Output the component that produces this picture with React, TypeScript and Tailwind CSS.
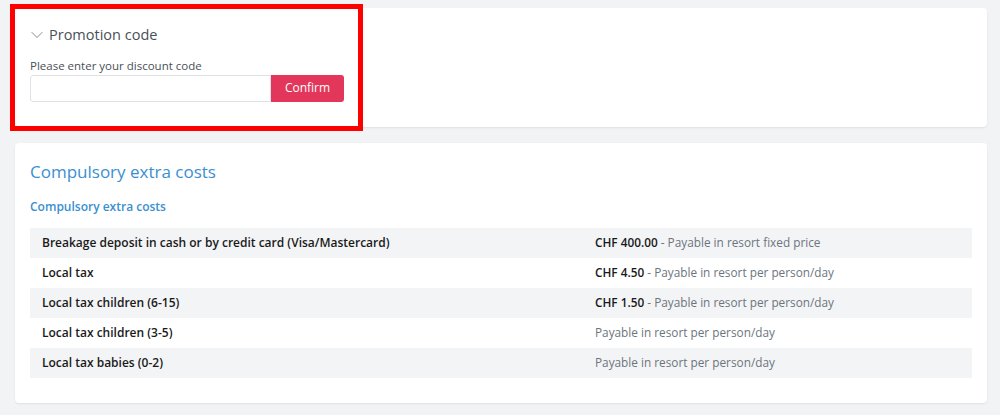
import { ChevronDown } from 'lucide-react';

const ROWS: { label: string; price?: string; note: string }[] = [
  { label: 'Breakage deposit in cash or by credit card (Visa/Mastercard)', price: 'CHF 400.00', note: 'Payable in resort fixed price' },
  { label: 'Local tax', price: 'CHF 4.50', note: 'Payable in resort per person/day' },
  { label: 'Local tax children (6-15)', price: 'CHF 1.50', note: 'Payable in resort per person/day' },
  { label: 'Local tax children (3-5)', note: 'Payable in resort per person/day' },
  { label: 'Local tax babies (0-2)', note: 'Payable in resort per person/day' },
];

export default function App() {
  return (
    <div className="relative min-h-[415px] bg-[#f1f3f5] pl-[15px] pr-[13px] pt-[8px] pb-3 font-['Open_Sans',sans-serif] text-[#212529]">
      {/* Promotion code */}
      <div className="h-[119px] rounded-[4px] bg-white px-[15px] pt-[16px] shadow-[0_1px_2px_rgba(0,0,0,0.08)]">
        <div className="flex items-center gap-[2px] text-[14.5px] text-[#495057]">
          <ChevronDown size={20} strokeWidth={1} className="-ml-[3px] text-[#6c757d]" />
          <span>Promotion code</span>
        </div>
        <p className="mt-[12px] text-[11.5px] leading-[16px] text-[#495057]">Please enter your discount code</p>
        <div className="mt-[1px] flex h-[27px] w-[314px]">
          <input className="h-full flex-1 rounded-l-[3px] border border-[#dee2e6] bg-white px-2 text-[12px] outline-none" />
          <button className="h-full w-[73px] rounded-r-[3px] bg-[#e2375a] text-[12px] font-medium text-white">Confirm</button>
        </div>
      </div>

      {/* Compulsory extra costs */}
      <div className="mt-[16px] rounded-[4px] bg-white px-[15px] pt-[16px] pb-[25px] shadow-[0_1px_2px_rgba(0,0,0,0.08)]">
        <h2 className="text-[17px] leading-[26px] text-[#3a8fd2]">Compulsory extra costs</h2>
        <h3 className="mt-[12px] text-[12px] font-semibold leading-[20px] text-[#3a8fd2]">Compulsory extra costs</h3>
        <div className="mt-[11px]">
          {ROWS.map((r, i) => (
            <div key={r.label} className={`flex h-[30px] items-center text-[12px] ${i % 2 === 0 ? 'bg-[#f3f4f6]' : 'bg-white'}`}>
              <div className="w-[565px] pl-[12px] font-semibold text-[#1a1a1a]">{r.label}</div>
              <div className="text-[11.8px] text-[#6c757d]">
                {r.price && (
                  <>
                    <span className="font-semibold text-[#1a1a1a]">{r.price}</span> -{' '}
                  </>
                )}
                {r.note}
              </div>
            </div>
          ))}
        </div>
      </div>

      {/* Highlight marker */}
      <div className="pointer-events-none absolute left-[10px] top-[4px] h-[127px] w-[353px] border-[5px] border-[#ff0000]" />
    </div>
  );
}
